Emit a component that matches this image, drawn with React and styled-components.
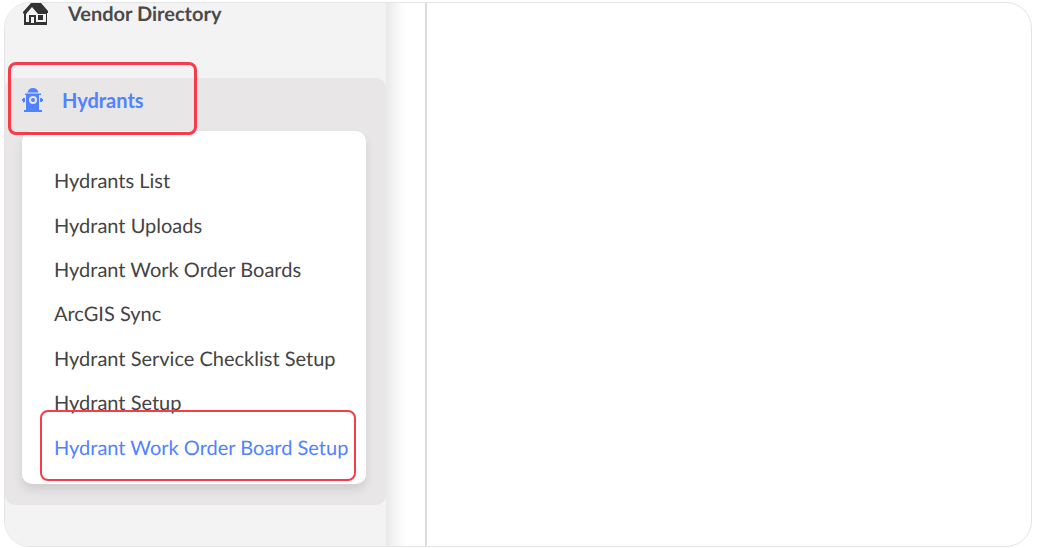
import React from "react";
import styled, { createGlobalStyle } from "styled-components";

const GlobalStyle = createGlobalStyle`
  * { box-sizing: border-box; }
  body { margin: 0; background: #fff; font-family: Lato, "Liberation Sans", sans-serif; text-rendering: geometricPrecision; }
`;

const Page = styled.div`
  display: flex;
  min-height: 100vh;
  padding: 2px 6px 1px 4px;
`;

const Frame = styled.div`
  flex: 1;
  display: flex;
  overflow: hidden;
  border: 1px solid #e4e4e7;
  border-radius: 26px;
  background: #fff;
`;

const Sidebar = styled.nav`
  flex: 0 0 381px;
  background: #f3f3f3;
  color: #444;
`;

const Gutter = styled.div`
  flex: 0 0 41px;
  border-right: 2px solid #dcdcdc;
  background: linear-gradient(to right, #e9e9e9 0, #f3f3f3 8px, #fcfcfc 16px, #fff 22px);
`;

const Content = styled.main`
  flex: 1;
  min-width: 0;
`;

const VendorLink = styled.a`
  display: flex;
  align-items: flex-end;
  gap: 20px;
  height: 22px;
  padding-left: 18px;
  color: #4a4a4a;
  font-size: 20px;
  font-weight: 700;
  line-height: 22px;
  text-decoration: none;
`;

const Group = styled.section`
  margin-top: 53px;
  padding: 0 20px 21px 17px;
  border-radius: 10px;
  background: #e8e6e7;
`;

const GroupHeader = styled.button`
  position: relative;
  display: flex;
  align-items: center;
  gap: 18px;
  width: 100%;
  height: 53px;
  padding: 0 0 10px;
  border: 0;
  background: none;
  color: #5182ff;
  font: inherit;
  font-size: 20px;
  font-weight: 700;
  line-height: 24px;
  cursor: pointer;
`;

const Highlight = styled.span`
  position: absolute;
  top: -16px;
  left: -14px;
  width: ${(p) => p.$width}px;
  height: ${(p) => p.$height}px;
  border: ${(p) => p.$stroke}px solid #f83b4b;
  border-radius: 8px;
  pointer-events: none;
`;

const Submenu = styled.ul`
  display: flex;
  flex-direction: column;
  min-height: 353px;
  margin: 0;
  padding: 28px 16px 14px 32px;
  border-radius: 10px;
  background: #fff;
  box-shadow: 0 6px 10px rgba(0, 0, 0, 0.1);
  list-style: none;
`;

const SubmenuItem = styled.li`
  position: relative;
  flex: 1;
  display: flex;
  align-items: center;
`;

const SubmenuLink = styled.a`
  color: ${(p) => (p.$active ? "#5182ff" : "#444")};
  font-size: 20px;
  line-height: 24px;
  text-decoration: none;
  white-space: nowrap;
`;

const HouseIcon = () => (
  <svg width="25" height="22" viewBox="0 0 25 22" aria-hidden="true">
    <path d="M8 0H18L25 8V10H24V22H1V11L0 10V9Z" fill="#333" />
    <path d="M9 4L15 11H23V19H3V11Z" fill="#f3f3f3" />
    <path d="M6 12H13V20H6Z" fill="#333" />
    <path d="M8 14H11V20H8Z" fill="#f3f3f3" />
    <path d="M15 12H20V17H15Z" fill="#333" />
  </svg>
);

const HydrantIcon = () => (
  <svg width="22" height="24" viewBox="0 0 22 24" fill="#5182ff" aria-hidden="true">
    <path d="M5.5 4.5C6 2 8 0 11 0S16 2 16.5 4.5ZM3 5.5H19V7H17V22H20V24H2V22H4V7H3Z" />
    <path d="M3 10V14H2V15L1 14V13H0V11H1V10ZM18 10H20V11H21V13H20V14H18Z" />
    <circle cx="11" cy="12" r="4" fill="#e8e6e7" />
    <circle cx="11" cy="12" r="2" />
  </svg>
);

const links = [
  "Hydrants List",
  "Hydrant Uploads",
  "Hydrant Work Order Boards",
  "ArcGIS Sync",
  "Hydrant Service Checklist Setup",
  "Hydrant Setup",
  "Hydrant Work Order Board Setup",
];

export default function App() {
  const active = links.length - 1;
  return (
    <>
      <GlobalStyle />
      <Page>
        <Frame>
          <Sidebar>
            <VendorLink href="#vendors">
              <HouseIcon />
              Vendor Directory
            </VendorLink>
            <Group>
              <GroupHeader type="button" aria-expanded="true">
                <HydrantIcon />
                Hydrants
                <Highlight $width={189} $height={73} $stroke={3} />
              </GroupHeader>
              <Submenu>
                {links.map((label, i) => (
                  <SubmenuItem key={label}>
                    <SubmenuLink href="#hydrants" $active={i === active}>
                      {label}
                    </SubmenuLink>
                    {i === active && (
                      <Highlight $width={316} $height={71} $stroke={2} />
                    )}
                  </SubmenuItem>
                ))}
              </Submenu>
            </Group>
          </Sidebar>
          <Gutter />
          <Content />
        </Frame>
      </Page>
    </>
  );
}
